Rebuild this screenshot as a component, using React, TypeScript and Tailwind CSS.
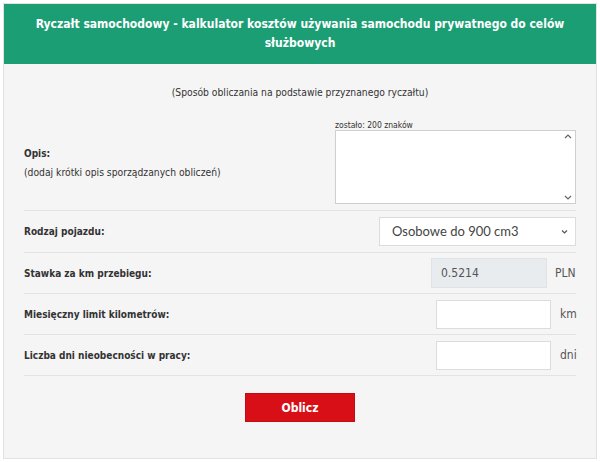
import React from "react";

const tahoma = { fontFamily: '"DejaVu Sans Condensed", "DejaVu Sans", sans-serif' };

export default function App() {
  return (
    <div className="w-[600px] h-[462px] bg-white p-[3px]" style={tahoma}>
      <div className="h-[456px] border border-[#e2e2e2] bg-[#f5f5f5] flex flex-col">
        <div className="bg-[#1b9e74] h-[60px] flex items-center justify-center px-4">
          <h1 className="text-white text-[12px] font-bold text-center leading-[19px]">
            Ryczałt samochodowy - kalkulator kosztów używania samochodu prywatnego do celów służbowych
          </h1>
        </div>
        <div className="px-[20px] flex flex-col">
          <div className="text-center text-[10.25px] text-[#333] mt-[21px]">
            (Sposób obliczania na podstawie przyznanego ryczałtu)
          </div>
          <div className="flex items-center justify-between border-b border-[#e3e3e3] pt-[15px] pb-[6px] mt-[5px]">
            <div className="pt-[2px]">
              <div className="text-[10px] leading-[14px] font-bold text-[#333]">Opis:</div>
              <div className="text-[10.25px] leading-[14px] text-[#333] mt-[4px]">(dodaj krótki opis sporządzanych obliczeń)</div>
            </div>
            <div className="flex flex-col">
              <div className="text-[8.5px] text-[#333] leading-[10px]">zostało: 200 znaków</div>
              <div className="w-[241px] h-[74px] bg-white border border-[#cfcfcf] flex justify-end">
                <div className="w-[14px] flex flex-col items-center justify-between py-[2px] text-[#777]">
                  <svg width="8" height="6" viewBox="0 0 8 6"><path d="M1 5 L4 2 L7 5" stroke="#666" strokeWidth="1.2" fill="none" /></svg>
                  <svg width="8" height="6" viewBox="0 0 8 6"><path d="M1 1 L4 4 L7 1" stroke="#666" strokeWidth="1.2" fill="none" /></svg>
                </div>
              </div>
            </div>
          </div>
          <div className="flex items-center justify-between border-b border-[#e3e3e3] h-[42px]">
            <div className="text-[10px] font-bold text-[#333]">Rodzaj pojazdu:</div>
            <div className="w-[197px] h-[29px] bg-white border border-[#dcdcdc] flex items-center justify-between pl-[12px] pr-[6px]">
              <span className="text-[13px] text-[#444]" style={{ fontFamily: 'Lato, sans-serif' }}>Osobowe do 900 cm3</span>
              <svg width="9" height="6" viewBox="0 0 9 6"><path d="M2 1.5 L4.5 4 L7 1.5" stroke="#555" strokeWidth="1.2" fill="none" /></svg>
            </div>
          </div>
          <div className="flex items-center justify-between border-b border-[#e3e3e3] h-[41px]">
            <div className="text-[10px] font-bold text-[#333]">Stawka za km przebiegu:</div>
            <div className="flex items-center gap-[8px]">
              <div className="w-[116px] h-[30px] bg-[#e9ecee] border border-[#e0e3e5] flex items-center pl-[9px] text-[12px] text-[#555]">0.5214</div>
              <span className="text-[12px] text-[#555] w-[21px]">PLN</span>
            </div>
          </div>
          <div className="flex items-center justify-between border-b border-[#e3e3e3] h-[41px]">
            <div className="text-[10px] font-bold text-[#333]">Miesięczny limit kilometrów:</div>
            <div className="flex items-center gap-[9px]">
              <div className="w-[115px] h-[29px] bg-white border border-[#dcdcdc]" />
              <span className="text-[12px] text-[#555] w-[16px]">km</span>
            </div>
          </div>
          <div className="flex items-center justify-between border-b border-[#e3e3e3] h-[41px]">
            <div className="text-[10px] font-bold text-[#333]">Liczba dni nieobecności w pracy:</div>
            <div className="flex items-center gap-[9px]">
              <div className="w-[115px] h-[29px] bg-white border border-[#dcdcdc]" />
              <span className="text-[12px] text-[#555] w-[16px]">dni</span>
            </div>
          </div>
          <div className="flex justify-center mt-[17px]">
            <button className="w-[110px] h-[29px] bg-[#d90f17] text-white text-[12px] font-bold border border-[#c00c12]" style={tahoma}>
              Oblicz
            </button>
          </div>
        </div>
      </div>
    </div>
  );
}
